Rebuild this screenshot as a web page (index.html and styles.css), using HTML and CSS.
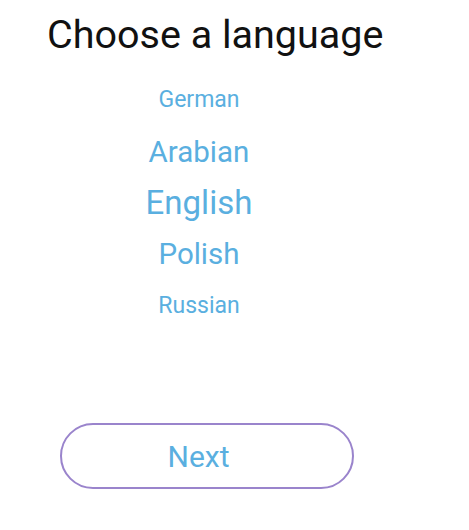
FILE: index.html
```html
<!DOCTYPE html>
<html lang="en">
<head>
  <meta charset="UTF-8">
  <meta name="viewport" content="width=device-width, initial-scale=1.0">
  <title>Choose a language</title>
  <link rel="stylesheet" href="styles.css">
</head>
<body>
  <h1 class="title">Choose a language</h1>
  <ul class="languages">
    <li class="lang lang-far">German</li>
    <li class="lang lang-near">Arabian</li>
    <li class="lang lang-active">English</li>
    <li class="lang lang-near">Polish</li>
    <li class="lang lang-far">Russian</li>
  </ul>
  <div class="actions">
    <button class="next-btn">Next</button>
  </div>
</body>
</html>
```

FILE: styles.css
```css
body {
  font-family: Roboto, "Noto Sans", sans-serif;
  background-color: #ffffff;
  margin: 0;
  width: 469px;
  height: 530px;
}
.title {
  margin: 0;
  padding: 12px 0 0 47px;
  font-size: 39.5px;
  font-weight: 400;
  color: #111;
  line-height: 46px;
}
.languages {
  list-style: none;
  margin: 0;
  padding: 16px 0 0;
  width: 398px;
  display: flex;
  flex-direction: column;
  align-items: center;
}
.lang {
  color: #5aafe0;
  line-height: 52px;
}
.lang-far {
  font-size: 23px;
}
.lang-near {
  font-size: 29.5px;
}
.lang-active {
  font-size: 33px;
  line-height: 50px;
}
.actions {
  padding: 91px 0 0 60px;
}
.next-btn {
  width: 294px;
  height: 66px;
  padding: 0 17px 0 0;
  border: 2px solid #9a84cc;
  border-radius: 33px;
  background: #fff;
  color: #5aafe0;
  font-family: Roboto, sans-serif;
  font-size: 30px;
}
```
